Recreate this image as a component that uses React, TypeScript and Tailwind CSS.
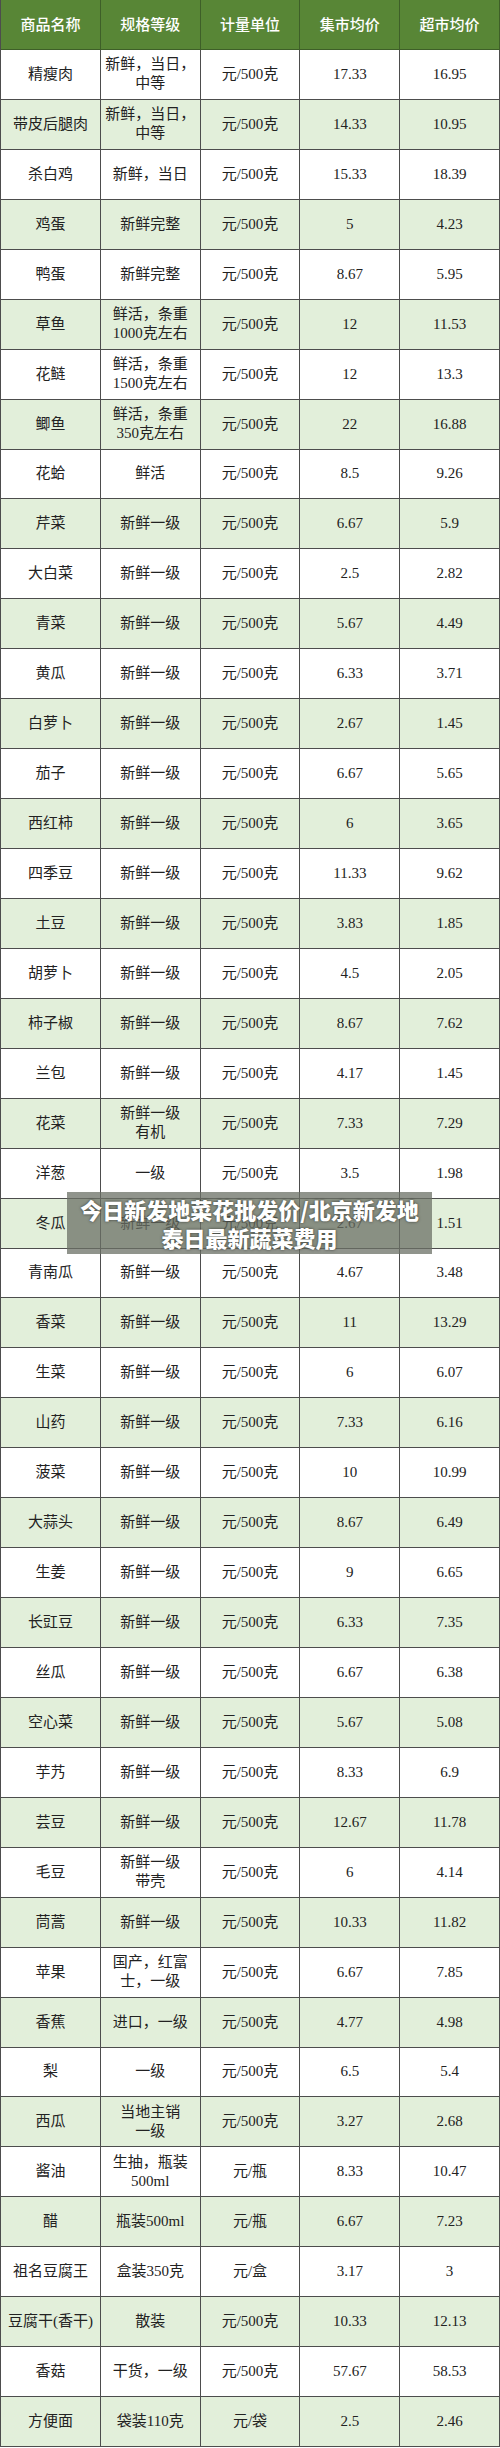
type Row = [string, string, string, string, string];

const rows: Row[] = [
  ["精瘦肉", "新鲜，当日，|中等", "元/500克", "17.33", "16.95"],
  ["带皮后腿肉", "新鲜，当日，|中等", "元/500克", "14.33", "10.95"],
  ["杀白鸡", "新鲜，当日", "元/500克", "15.33", "18.39"],
  ["鸡蛋", "新鲜完整", "元/500克", "5", "4.23"],
  ["鸭蛋", "新鲜完整", "元/500克", "8.67", "5.95"],
  ["草鱼", "鲜活，条重|1000克左右", "元/500克", "12", "11.53"],
  ["花鲢", "鲜活，条重|1500克左右", "元/500克", "12", "13.3"],
  ["鲫鱼", "鲜活，条重|350克左右", "元/500克", "22", "16.88"],
  ["花蛤", "鲜活", "元/500克", "8.5", "9.26"],
  ["芹菜", "新鲜一级", "元/500克", "6.67", "5.9"],
  ["大白菜", "新鲜一级", "元/500克", "2.5", "2.82"],
  ["青菜", "新鲜一级", "元/500克", "5.67", "4.49"],
  ["黄瓜", "新鲜一级", "元/500克", "6.33", "3.71"],
  ["白萝卜", "新鲜一级", "元/500克", "2.67", "1.45"],
  ["茄子", "新鲜一级", "元/500克", "6.67", "5.65"],
  ["西红柿", "新鲜一级", "元/500克", "6", "3.65"],
  ["四季豆", "新鲜一级", "元/500克", "11.33", "9.62"],
  ["土豆", "新鲜一级", "元/500克", "3.83", "1.85"],
  ["胡萝卜", "新鲜一级", "元/500克", "4.5", "2.05"],
  ["柿子椒", "新鲜一级", "元/500克", "8.67", "7.62"],
  ["兰包", "新鲜一级", "元/500克", "4.17", "1.45"],
  ["花菜", "新鲜一级|有机", "元/500克", "7.33", "7.29"],
  ["洋葱", "一级", "元/500克", "3.5", "1.98"],
  ["冬瓜", "新鲜一级", "元/500克", "2.67", "1.51"],
  ["青南瓜", "新鲜一级", "元/500克", "4.67", "3.48"],
  ["香菜", "新鲜一级", "元/500克", "11", "13.29"],
  ["生菜", "新鲜一级", "元/500克", "6", "6.07"],
  ["山药", "新鲜一级", "元/500克", "7.33", "6.16"],
  ["菠菜", "新鲜一级", "元/500克", "10", "10.99"],
  ["大蒜头", "新鲜一级", "元/500克", "8.67", "6.49"],
  ["生姜", "新鲜一级", "元/500克", "9", "6.65"],
  ["长豇豆", "新鲜一级", "元/500克", "6.33", "7.35"],
  ["丝瓜", "新鲜一级", "元/500克", "6.67", "6.38"],
  ["空心菜", "新鲜一级", "元/500克", "5.67", "5.08"],
  ["芋艿", "新鲜一级", "元/500克", "8.33", "6.9"],
  ["芸豆", "新鲜一级", "元/500克", "12.67", "11.78"],
  ["毛豆", "新鲜一级|带壳", "元/500克", "6", "4.14"],
  ["茼蒿", "新鲜一级", "元/500克", "10.33", "11.82"],
  ["苹果", "国产，红富|士，一级", "元/500克", "6.67", "7.85"],
  ["香蕉", "进口，一级", "元/500克", "4.77", "4.98"],
  ["梨", "一级", "元/500克", "6.5", "5.4"],
  ["西瓜", "当地主销|一级", "元/500克", "3.27", "2.68"],
  ["酱油", "生抽，瓶装|500ml", "元/瓶", "8.33", "10.47"],
  ["醋", "瓶装500ml", "元/瓶", "6.67", "7.23"],
  ["祖名豆腐王", "盒装350克", "元/盒", "3.17", "3"],
  ["豆腐干(香干)", "散装", "元/500克", "10.33", "12.13"],
  ["香菇", "干货，一级", "元/500克", "57.67", "58.53"],
  ["方便面", "袋装110克", "元/袋", "2.5", "2.46"],
];

const headers = ["商品名称", "规格等级", "计量单位", "集市均价", "超市均价"];

function Cell({ text }: { text: string }) {
  const lines = text.split("|");
  return (
    <div className="flex items-center justify-center border-r border-b border-[#4d4d4d] text-center leading-[19px]">
      <div>
        {lines.map((l, i) => (
          <div key={i}>{l}</div>
        ))}
      </div>
    </div>
  );
}

export default function App() {
  return (
    <div
      className="relative w-[500px] bg-white text-[15px] text-[#222]"
      style={{ fontFamily: '"Liberation Serif", "Noto Sans CJK SC", serif' }}
    >
      {/* HEADER */}
      <div className="grid h-[50px] grid-cols-5 border-l border-[#4d4d4d] bg-[#588636] text-white">
        {headers.map((h) => (
          <div
            key={h}
            className="flex items-center justify-center border-r border-b border-[#3e5f28] font-medium"
            style={{ fontFamily: '"Noto Sans CJK SC", sans-serif' }}
          >
            {h}
          </div>
        ))}
      </div>

      {/* ROWS */}
      {rows.map((r, i) => (
        <div
          key={r[0]}
          className={`grid h-[49.94px] grid-cols-5 border-l border-[#4d4d4d] ${
            i % 2 === 1 ? "bg-[#e2efda]" : "bg-white"
          }`}
        >
          {r.map((c, j) => (
            <Cell key={j} text={c} />
          ))}
        </div>
      ))}

      {/* TITLE OVERLAY */}
      <div className="absolute left-[67px] top-[1192px] flex h-[62px] w-[365px] flex-col items-center justify-center bg-[#6b7066]/75">
        <p
          className="text-[22px] font-black leading-[28px] text-white [text-shadow:0_0_3px_rgba(0,0,0,0.6)]"
          style={{ fontFamily: '"Noto Sans CJK SC", sans-serif' }}
        >
          今日新发地菜花批发价/北京新发地
        </p>
        <p
          className="text-[22px] font-black leading-[28px] text-white [text-shadow:0_0_3px_rgba(0,0,0,0.6)]"
          style={{ fontFamily: '"Noto Sans CJK SC", sans-serif' }}
        >
          泰日最新蔬菜费用
        </p>
      </div>
    </div>
  );
}
